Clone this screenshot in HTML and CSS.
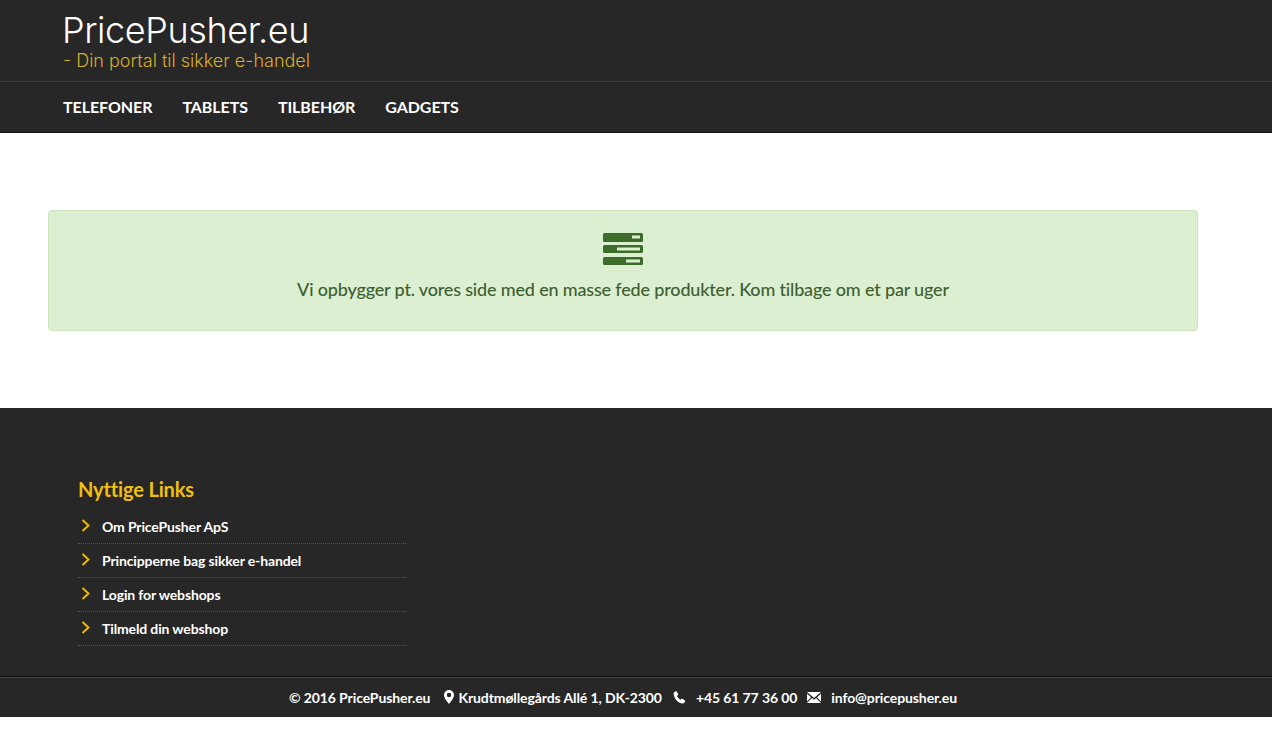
FILE: index.html
```html
<!DOCTYPE html>
<html lang="da">
<head>
    <meta charset="UTF-8">
    <meta name="viewport" content="width=device-width, initial-scale=1.0">
    <title>PricePusher.eu</title>
    <link rel="stylesheet" href="styles.css">
</head>
<body>
    <header>
        <div class="brand">
            <a class="logo" href="#">PricePusher.eu</a>
            <p class="tagline">- Din portal til sikker e-handel</p>
        </div>
        <nav>
            <ul>
                <li><a href="#">TELEFONER</a></li>
                <li><a href="#">TABLETS</a></li>
                <li><a href="#">TILBEHØR</a></li>
                <li><a href="#">GADGETS</a></li>
            </ul>
        </nav>
    </header>

    <main>
        <div class="alert">
            <svg class="alert-icon" width="40" height="32" viewBox="0 0 40 32">
                <rect x="0" y="0" width="40" height="9" rx="1.5" fill="#3c6b2a"/>
                <rect x="29" y="2.500" width="8" height="3" fill="#dcefd0"/>
                <rect x="0" y="12" width="40" height="8" rx="1.5" fill="#3c6b2a"/>
                <rect x="14" y="14.500" width="23" height="3" fill="#dcefd0"/>
                <rect x="0" y="24" width="40" height="8" rx="1.5" fill="#3c6b2a"/>
                <rect x="23" y="26.500" width="14" height="3" fill="#dcefd0"/>
            </svg>
            <p>Vi opbygger pt. vores side med en masse fede produkter. Kom tilbage om et par uger</p>
        </div>
    </main>

    <footer>
        <div class="links">
            <h3>Nyttige Links</h3>
            <ul>
                <li><svg class="chevron" width="9" height="13" viewBox="0 0 9 13"><path d="M1.500 1l6 5.500-6 5.500" fill="none" stroke="#f1bf0e" stroke-width="1.800"/></svg><a href="#">Om PricePusher ApS</a></li>
                <li><svg class="chevron" width="9" height="13" viewBox="0 0 9 13"><path d="M1.500 1l6 5.500-6 5.500" fill="none" stroke="#f1bf0e" stroke-width="1.800"/></svg><a href="#">Principperne bag sikker e-handel</a></li>
                <li><svg class="chevron" width="9" height="13" viewBox="0 0 9 13"><path d="M1.500 1l6 5.500-6 5.500" fill="none" stroke="#f1bf0e" stroke-width="1.800"/></svg><a href="#">Login for webshops</a></li>
                <li><svg class="chevron" width="9" height="13" viewBox="0 0 9 13"><path d="M1.500 1l6 5.500-6 5.500" fill="none" stroke="#f1bf0e" stroke-width="1.800"/></svg><a href="#">Tilmeld din webshop</a></li>
            </ul>
        </div>
    </footer>

    <div class="bottom-bar">
        <span>© 2016 PricePusher.eu</span>
        <span class="contact pin">
            <svg width="10" height="14" viewBox="0 0 10 14"><path fill-rule="evenodd" fill="#fff" d="M5 0a5 5 0 0 1 5 5c0 3-3 6.500-5 9-2-2.500-5-6-5-9a5 5 0 0 1 5-5zm0 2.800a2.200 2.200 0 1 0 0 4.400 2.200 2.200 0 0 0 0-4.400z"/></svg>
            Krudtmøllegårds Allé 1, DK-2300
        </span>
        <span class="contact phone">
            <svg width="13" height="13" viewBox="0 0 13 13"><path fill="#fff" d="M2.800.3l1 .1 1.400 2.900-.2.800-1 1c.7 1.500 1.900 2.800 3.400 3.700l1.100-1 .8-.1 2.800 1.700v.9c-.5 1.300-1.500 2.300-2.600 2.300C5 12.300.9 7 .6 3 .6 1.800 1.500.8 2.800.3z"/></svg>
            +45 61 77 36 00
        </span>
        <span class="contact mail">
            <svg width="14" height="11" viewBox="0 0 14 11"><path fill="#fff" d="M0 0h14L7 6 0 0zm0 1.800L4 5.200 0 9.400V1.800zm14 0v7.600L10 5.200l4-3.400zM4.900 6L7 7.800 9.100 6 14 11H0l4.900-5z"/></svg>
            info@pricepusher.eu
        </span>
    </div>
</body>
</html>
```

FILE: styles.css
```css
/* Common CSS */
body {
    font-family: Lato, Arial, sans-serif;
    margin: 0;
    padding: 0;
    background-color: #fff;
    color: #fff;
}

a {
    color: inherit;
    text-decoration: none;
}

ul {
    list-style: none;
    margin: 0;
    padding: 0;
}

/* Header */
header {
    background: #272727;
    border-bottom: 1px solid #111;
}

.brand {
    height: 72px;
    padding: 9px 0 0 63px;
    border-bottom: 1px solid #3a3a3a;
}

.logo {
    display: block;
    margin-left: -1px;
    font-family: Inter, "Liberation Sans", sans-serif;
    font-weight: 300;
    font-size: 36px;
    line-height: 42px;
    letter-spacing: -0.4px;
    color: #fff;
}

.tagline {
    margin: 0;
    font-family: Inter, "Liberation Sans", sans-serif;
    font-weight: 300;
    font-size: 18px;
    line-height: 20px;
    color: #d9ad2c;
}

nav ul {
    display: flex;
    gap: 30px;
    padding: 0 0 2px 63px;
    height: 48px;
    align-items: center;
}

nav a {
    font-size: 16px;
    font-weight: 700;
    letter-spacing: -0.07px;
    color: #fff;
}

/* Main */
main {
    padding: 77px 74px 77px 48px;
}

.alert {
    height: 121px;
    box-sizing: border-box;
    padding-top: 22px;
    background: #dcefd0;
    border: 1px solid #cde4bd;
    border-radius: 4px;
    text-align: center;
    color: #3c6030;
}

.alert-icon {
    display: block;
    margin: 0 auto;
}

.alert p {
    margin: 11px 0 0;
    font-size: 18px;
    font-weight: 500;
    line-height: 26px;
    letter-spacing: -0.17px;
}

/* Footer */
footer {
    background: #272727;
    height: 268px;
    box-sizing: border-box;
    padding: 67px 0 0 78px;
}

.links {
    width: 328px;
}

.links h3 {
    margin: 0 0 7px;
    font-size: 20px;
    line-height: 28px;
    font-weight: 700;
    letter-spacing: -0.15px;
    color: #f1bf0e;
}

.links li {
    display: flex;
    align-items: center;
    height: 34px;
    box-sizing: border-box;
    border-bottom: 1px dotted #555;
    font-size: 14px;
    font-weight: 700;
    letter-spacing: -0.13px;
}

.chevron {
    margin: -2px 12px 0 3px;
}

.bottom-bar {
    background: #272727;
    border-top: 1px solid #111;
    box-shadow: inset 0 1px 0 #444;
    height: 40px;
    padding-right: 26px;
    display: flex;
    justify-content: center;
    align-items: center;
    gap: 12px;
    font-size: 14px;
    font-weight: 700;
    letter-spacing: -0.1px;
}

.contact {
    display: flex;
    align-items: center;
    gap: 10px;
}

.pin {
    gap: 4px;
    margin-left: 2px;
}

.phone {
    margin-left: -1px;
}

.mail {
    margin-left: -2px;
}
```
